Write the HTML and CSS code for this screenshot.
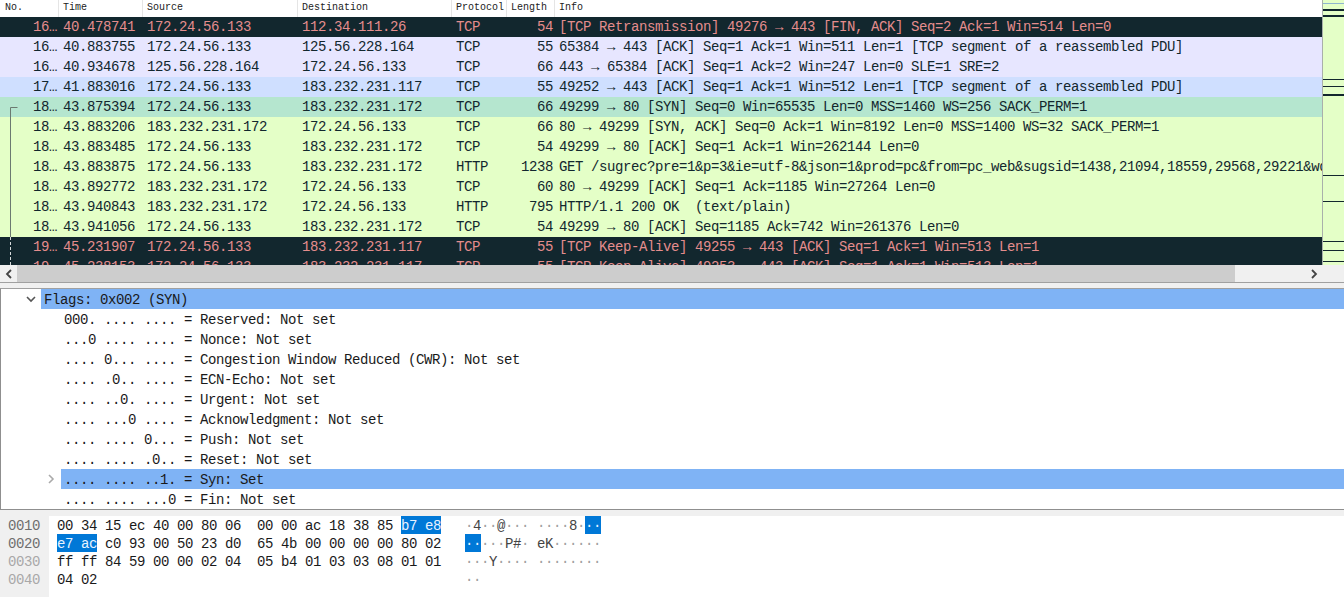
FILE: index.html
```html
<!DOCTYPE html>
<html lang="en">
<head>
<meta charset="utf-8">
<title>Wireshark</title>
<link rel="stylesheet" href="styles.css">
</head>
<body>
<div class="app">
  <section class="packets">
    <div class="list">
      <div class="row head"><span>No.</span><span>Time</span><span>Source</span><span>Destination</span><span>Protocol</span><span>Length</span><span>Info</span></div>
      <div class="row dark"><span class="no">16…</span><span>40.478741</span><span>172.24.56.133</span><span>112.34.111.26</span><span>TCP</span><span class="len">54</span><span>[TCP Retransmission] 49276 → 443 [FIN, ACK] Seq=2 Ack=1 Win=514 Len=0</span></div>
      <div class="row lav"><span class="no">16…</span><span>40.883755</span><span>172.24.56.133</span><span>125.56.228.164</span><span>TCP</span><span class="len">55</span><span>65384 → 443 [ACK] Seq=1 Ack=1 Win=511 Len=1 [TCP segment of a reassembled PDU]</span></div>
      <div class="row lav"><span class="no">16…</span><span>40.934678</span><span>125.56.228.164</span><span>172.24.56.133</span><span>TCP</span><span class="len">66</span><span>443 → 65384 [ACK] Seq=1 Ack=2 Win=247 Len=0 SLE=1 SRE=2</span></div>
      <div class="row blue"><span class="no">17…</span><span>41.883016</span><span>172.24.56.133</span><span>183.232.231.117</span><span>TCP</span><span class="len">55</span><span>49252 → 443 [ACK] Seq=1 Ack=1 Win=512 Len=1 [TCP segment of a reassembled PDU]</span></div>
      <div class="row green"><span class="no">18…</span><span>43.875394</span><span>172.24.56.133</span><span>183.232.231.172</span><span>TCP</span><span class="len">66</span><span>49299 → 80 [SYN] Seq=0 Win=65535 Len=0 MSS=1460 WS=256 SACK_PERM=1</span></div>
      <div class="row lime"><span class="no">18…</span><span>43.883206</span><span>183.232.231.172</span><span>172.24.56.133</span><span>TCP</span><span class="len">66</span><span>80 → 49299 [SYN, ACK] Seq=0 Ack=1 Win=8192 Len=0 MSS=1400 WS=32 SACK_PERM=1</span></div>
      <div class="row lime"><span class="no">18…</span><span>43.883485</span><span>172.24.56.133</span><span>183.232.231.172</span><span>TCP</span><span class="len">54</span><span>49299 → 80 [ACK] Seq=1 Ack=1 Win=262144 Len=0</span></div>
      <div class="row lime"><span class="no">18…</span><span>43.883875</span><span>172.24.56.133</span><span>183.232.231.172</span><span>HTTP</span><span class="len">1238</span><span>GET /sugrec?pre=1&amp;p=3&amp;ie=utf-8&amp;json=1&amp;prod=pc&amp;from=pc_web&amp;sugsid=1438,21094,18559,29568,29221&amp;wd=</span></div>
      <div class="row lime"><span class="no">18…</span><span>43.892772</span><span>183.232.231.172</span><span>172.24.56.133</span><span>TCP</span><span class="len">60</span><span>80 → 49299 [ACK] Seq=1 Ack=1185 Win=27264 Len=0</span></div>
      <div class="row lime"><span class="no">18…</span><span>43.940843</span><span>183.232.231.172</span><span>172.24.56.133</span><span>HTTP</span><span class="len">795</span><span>HTTP/1.1 200 OK  (text/plain)</span></div>
      <div class="row lime"><span class="no">18…</span><span>43.941056</span><span>172.24.56.133</span><span>183.232.231.172</span><span>TCP</span><span class="len">54</span><span>49299 → 80 [ACK] Seq=1185 Ack=742 Win=261376 Len=0</span></div>
      <div class="row dark"><span class="no">19…</span><span>45.231907</span><span>172.24.56.133</span><span>183.232.231.117</span><span>TCP</span><span class="len">55</span><span>[TCP Keep-Alive] 49255 → 443 [ACK] Seq=1 Ack=1 Win=513 Len=1</span></div>
      <div class="row dark"><span class="no">19…</span><span>45.238153</span><span>172.24.56.133</span><span>183.232.231.117</span><span>TCP</span><span class="len">55</span><span>[TCP Keep-Alive] 49253 → 443 [ACK] Seq=1 Ack=1 Win=513 Len=1</span></div>
      <svg class="conv" width="20" height="265" viewBox="0 0 20 265" aria-hidden="true">
        <path d="M17.5 107.5H10.5V237" fill="none" stroke="#6b7a70"/>
        <path d="M10.5 237V265" fill="none" stroke="#d5dadb" stroke-dasharray="3 2"/>
      </svg>
    </div>
    <svg class="minimap" width="21" height="265" viewBox="0 0 21 265" aria-hidden="true">
      <rect width="21" height="265" fill="#e4ffc7"/>
      <rect y="3" width="21" height="1" fill="#8fb5cf"/>
      <rect y="9" width="21" height="2" fill="#12272e"/>
      <rect y="15" width="21" height="2" fill="#12272e"/>
      <rect y="79" width="21" height="1" fill="#12272e"/>
      <rect y="86" width="21" height="1" fill="#12272e"/>
      <rect y="94" width="21" height="2" fill="#12272e"/>
      <rect y="175" width="21" height="1" fill="#12272e"/>
      <rect y="201" width="21" height="1" fill="#12272e"/>
      <rect y="241" width="21" height="1" fill="#12272e"/>
      <rect y="250" width="21" height="1" fill="#12272e"/>
      <rect y="261" width="21" height="1" fill="#12272e"/>
    </svg>
  </section>

  <div class="hscroll">
    <div class="arrow">
      <svg width="8" height="10" viewBox="0 0 8 10" aria-hidden="true"><path d="M6 1L2 5L6 9" fill="none" stroke="#444" stroke-width="1.8"/></svg>
    </div>
    <div class="thumb"></div>
    <div class="arrow end">
      <svg width="8" height="10" viewBox="0 0 8 10" aria-hidden="true"><path d="M2 1L6 5L2 9" fill="none" stroke="#444" stroke-width="1.8"/></svg>
    </div>
  </div>

  <section class="details">
    <div class="line lvl0 sel"><svg class="chev" width="10" height="8" viewBox="0 0 10 8" aria-hidden="true"><path d="M1 2L5 6L9 2" fill="none" stroke="#555" stroke-width="1.6"/></svg>Flags: 0x002 (SYN)</div>
    <div class="line lvl1">000. .... .... = Reserved: Not set</div>
    <div class="line lvl1">...0 .... .... = Nonce: Not set</div>
    <div class="line lvl1">.... 0... .... = Congestion Window Reduced (CWR): Not set</div>
    <div class="line lvl1">.... .0.. .... = ECN-Echo: Not set</div>
    <div class="line lvl1">.... ..0. .... = Urgent: Not set</div>
    <div class="line lvl1">.... ...0 .... = Acknowledgment: Not set</div>
    <div class="line lvl1">.... .... 0... = Push: Not set</div>
    <div class="line lvl1">.... .... .0.. = Reset: Not set</div>
    <div class="line lvl1 sel"><svg class="chev right" width="8" height="10" viewBox="0 0 8 10" aria-hidden="true"><path d="M2 1L6 5L2 9" fill="none" stroke="#aaa" stroke-width="1.6"/></svg>.... .... ..1. = Syn: Set</div>
    <div class="line lvl1">.... .... ...0 = Fin: Not set</div>
  </section>

  <section class="hex">
    <div class="offsets">
      <div class="off">0010</div>
      <div class="off">0020</div>
      <div class="off faint">0030</div>
      <div class="off faint">0040</div>
    </div>
    <div class="bytes">
      <div class="hexrow"><span class="hx">00 34 15 ec 40 00 80 06  00 00 ac 18 38 85 <b class="mark">b7 e8</b></span><span class="asc">·<i>4</i>··<i>@</i>··· ····<i>8</i>·<b class="mark">··</b></span></div>
      <div class="hexrow"><span class="hx"><b class="mark">e7 ac</b> c0 93 00 50 23 d0  65 4b 00 00 00 00 80 02</span><span class="asc"><b class="mark">··</b>···<i>P#</i>· <i>eK</i>······</span></div>
      <div class="hexrow"><span class="hx">ff ff 84 59 00 00 02 04  05 b4 01 03 03 08 01 01</span><span class="asc">···<i>Y</i>···· ········</span></div>
      <div class="hexrow"><span class="hx">04 02</span><span class="asc">··</span></div>
    </div>
  </section>
</div>
</body>
</html>
```

FILE: styles.css
```css
* { box-sizing: border-box; }
html, body { margin: 0; height: 100%; background: #fff; }
.app {
  width: 1344px;
  height: 597px;
  overflow: hidden;
  display: flex;
  flex-direction: column;
  font-family: "Liberation Mono", monospace;
  font-size: 14px;
  letter-spacing: -0.4px;
  color: #1a1a1a;
  background: #f0f0f0;
}

/* packet list */
.packets { display: flex; height: 265px; flex: none; }
.list {
  position: relative;
  width: 1323px;
  height: 265px;
  overflow: hidden;
  background: #fff;
  border-right: 1px solid #a9b0ab;
  flex: none;
}
.row {
  display: grid;
  grid-template-columns: 59px 84px 155px 154px 55px 48px 900px;
  height: 20px;
  line-height: 20px;
  white-space: pre;
  color: #12272e;
}
.row > span { padding-left: 4px; overflow: hidden; }
.row > span:last-child { overflow: visible; }
.row > .no, .row > .len { text-align: right; padding: 0 2px 0 0; }
.head {
  height: 17px;
  line-height: 15px;
  font-size: 10px;
  letter-spacing: 0;
  background: #fff;
  color: #222;
}
.head > span { border-right: 1px solid #e5e5e5; }
.head > span:first-child { padding-left: 5px; }
.head > span:last-child { border-right: 0; }
.dark { background: #12272e; color: #e58d8d; }
.lav { background: #e7e6ff; }
.blue { background: #cfdfff; }
.green { background: #b5e6cf; }
.lime { background: #e4ffc7; }
.conv { position: absolute; left: 0; top: 0; }
.minimap { display: block; flex: none; width: 21px; }

/* horizontal scrollbar */
.hscroll {
  display: flex;
  flex: none;
  height: 18px;
  background: #f0f0f0;
  border-bottom: 1px solid #a0a0a0;
}
.arrow {
  width: 17px;
  display: flex;
  align-items: center;
  justify-content: center;
  flex: none;
}
.arrow.end { margin-left: auto; margin-right: 22px; }
.thumb { width: 1218px; background: #cdcdcd; }

/* packet details */
.details {
  flex: none;
  height: 222px;
  margin-top: 5px;
  background: #fff;
  border-top: 1px solid #a0a0a0;
  border-left: 1px solid #8f8f8f;
  border-bottom: 1px solid #8f8f8f;
  overflow: hidden;
}
.line {
  position: relative;
  height: 20px;
  line-height: 22px;
  white-space: pre;
  color: #1a1a1a;
}
.lvl0 { margin-left: 40px; padding-left: 3px; }
.lvl1 { margin-left: 60px; padding-left: 3px; }
.sel { background: #7fb3f5; }
.chev { position: absolute; left: -15px; top: 6px; }
.chev.right { left: -14px; top: 5px; }

/* hex dump */
.hex {
  flex: 1;
  display: flex;
  margin-top: 6px;
  background: #fff;
}
.offsets { width: 49px; flex: none; background: #f0f0f0; padding-left: 8px; }
.off { height: 18px; line-height: 20px; color: #6e6e6e; }
.off.faint { color: #a8a8a8; }
.bytes { padding-left: 8px; }
.hexrow { display: flex; height: 18px; line-height: 20px; white-space: pre; color: #1a1a1a; }
.hx { width: 408px; flex: none; }
.asc { color: #a0a0a0; }
.asc i { font-style: normal; color: #444; }
.mark {
  display: inline-block;
  height: 18px;
  vertical-align: top;
  font-weight: normal;
  background: #0078d7;
  color: #e8f2ff;
}
```
